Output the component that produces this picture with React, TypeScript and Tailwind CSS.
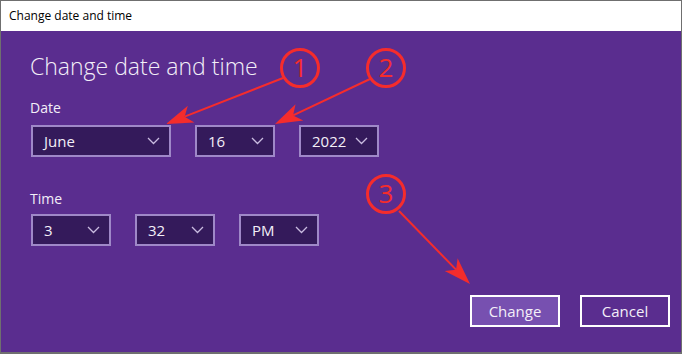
import React from "react";

const FONT = { fontFamily: '"Open Sans", "Noto Sans", sans-serif' };

function Chevron() {
  return (
    <svg width="13" height="8" viewBox="0 0 13 8" className="shrink-0">
      <polyline points="1,1 6.5,6.5 12,1" fill="none" stroke="#c9bbe0" strokeWidth="1.3" />
    </svg>
  );
}

function Select({ value, width }: { value: string; width: string }) {
  return (
    <div
      className={`${width} h-[32px] flex items-center justify-between pl-[11px] pr-[9px] bg-[#341a5b] border-2 border-[#9f88c8] text-[15px] text-[#f3eff8]`}
    >
      <span>{value}</span>
      <Chevron />
    </div>
  );
}

type Pt = [number, number];

function Arrow({ from, to }: { from: Pt; to: Pt }) {
  const dx = to[0] - from[0];
  const dy = to[1] - from[1];
  const len = Math.hypot(dx, dy);
  const ux = dx / len;
  const uy = dy / len;
  const nx = -uy;
  const ny = ux;
  const L = 27;
  const W = 9;
  const back: Pt = [to[0] - ux * L, to[1] - uy * L];
  const notch: Pt = [to[0] - ux * (L - 7), to[1] - uy * (L - 7)];
  const pts = [
    to,
    [back[0] + nx * W, back[1] + ny * W],
    notch,
    [back[0] - nx * W, back[1] - ny * W],
  ]
    .map((p) => p.join(","))
    .join(" ");
  return (
    <g>
      <line x1={from[0]} y1={from[1]} x2={notch[0]} y2={notch[1]} stroke="#f52c2c" strokeWidth="2" />
      <polygon points={pts} fill="#f52c2c" />
    </g>
  );
}

function Badge({ cx, cy, n }: { cx: number; cy: number; n: string }) {
  return (
    <g>
      <circle cx={cx} cy={cy} r="18.5" fill="none" stroke="#f52c2c" strokeWidth="3" />
      <text
        x={cx}
        y={cy + 9}
        textAnchor="middle"
        fontSize="26"
        fill="#f52c2c"
        style={FONT}
      >
        {n}
      </text>
    </g>
  );
}

export default function App() {
  return (
    <div
      className="relative w-[682px] h-[354px] flex flex-col border border-b-2 border-[#6f6f6f] bg-white overflow-hidden"
      style={FONT}
    >
      <div className="h-[30px] shrink-0 bg-white flex items-center pl-[8px] text-[12px] text-black">
        Change date and time
      </div>

      <div className="flex-1 flex flex-col bg-[#5a2d8f] pl-[29px] pr-[11px] text-white">
        <h1 className="mt-[19px] text-[23px] leading-[32px] font-light text-[#f3eff8]">
          Change date and time
        </h1>
        <div className="mt-[16px] text-[14px] leading-[20px] text-[#f3eff8]">Date</div>
        <div className="mt-[7px] flex gap-[24px] ml-[1px]">
          <Select value="June" width="w-[140px]" />
          <Select value="16" width="w-[80px]" />
          <Select value="2022" width="w-[80px]" />
        </div>
        <div className="mt-[32px] text-[14px] leading-[20px] text-[#f3eff8]">Time</div>
        <div className="mt-[5px] flex gap-[24px] ml-[1px]">
          <Select value="3" width="w-[80px]" />
          <Select value="32" width="w-[80px]" />
          <Select value="PM" width="w-[80px]" />
        </div>
        <div className="mt-[49px] flex justify-end gap-[20px]">
          <button className="w-[90px] h-[32px] border-2 border-white bg-[#7750b0] text-[15px] text-[#f3eff8]">
            Change
          </button>
          <button className="w-[90px] h-[32px] border-2 border-white bg-[#5a2d8f] text-[15px] text-[#f3eff8]">
            Cancel
          </button>
        </div>
      </div>

      <svg className="absolute left-[-1px] top-[-1px] pointer-events-none" width="682" height="354">
        <Arrow from={[283, 78]} to={[166, 124]} />
        <Arrow from={[370, 79]} to={[275, 124]} />
        <Arrow from={[399, 211]} to={[470, 284]} />
        <Badge cx={300} cy={68} n="1" />
        <Badge cx={386} cy={68} n="2" />
        <Badge cx={386} cy={194} n="3" />
      </svg>
    </div>
  );
}
